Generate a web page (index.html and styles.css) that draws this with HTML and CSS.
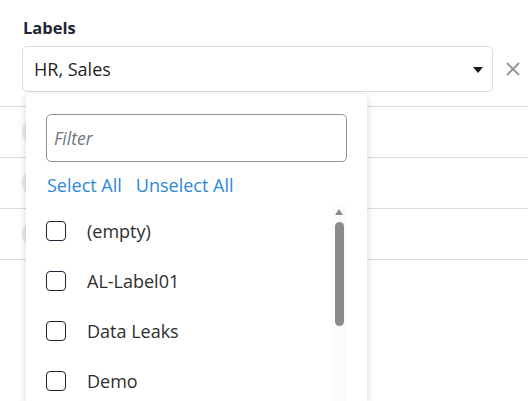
FILE: index.html
```html
<!DOCTYPE html>
<html>
<head>
<meta charset="utf-8">
<link rel="stylesheet" href="styles.css">
</head>
<body>
<div class="page">
  <div class="field">
    <div class="field-label">Labels</div>
    <div class="select-row">
      <div class="select">
        <span class="select-value">HR, Sales</span>
        <span class="caret"></span>
      </div>
      <svg class="clear" width="14" height="14" viewBox="0 0 14 14"><path d="M1 1L13 13M13 1L1 13" stroke="#8c939c" stroke-width="1.8" fill="none"/></svg>
    </div>
  </div>
  <div class="rows">
    <div class="row"><span class="pill"></span></div>
    <div class="row"><span class="pill"></span></div>
    <div class="row"><span class="pill"></span></div>
  </div>

  <div class="dropdown">
    <div class="filter"><span class="placeholder">Filter</span></div>
    <div class="actions"><a class="link">Select All</a><a class="link">Unselect All</a></div>
    <div class="list">
      <div class="items">
        <div class="item"><span class="box"></span><span class="item-text">(empty)</span></div>
        <div class="item"><span class="box"></span><span class="item-text">AL-Label01</span></div>
        <div class="item"><span class="box"></span><span class="item-text">Data Leaks</span></div>
        <div class="item"><span class="box"></span><span class="item-text">Demo</span></div>
      </div>
      <div class="scrollbar">
        <span class="arrow"></span>
        <span class="thumb"></span>
      </div>
    </div>
  </div>
</div>
</body>
</html>
```

FILE: styles.css
```css
html, body {
  margin: 0;
  padding: 0;
  background: #fff;
  overflow: hidden;
}
body {
  font-family: "Open Sans", "Noto Sans", sans-serif;
  width: 528px;
  height: 401px;
}
.page {
  position: relative;
  height: 401px;
  overflow: hidden;
}
.field {
  padding: 17px 0 0 22px;
}
.field-label {
  font-size: 16.5px;
  font-weight: 700;
  color: #1c2636;
  line-height: 22px;
  padding-left: 1px;
  margin-bottom: 7px;
}
.select-row {
  display: flex;
  align-items: center;
}
.select {
  box-sizing: border-box;
  width: 471px;
  height: 46px;
  border: 1px solid #dcdcdc;
  border-radius: 5px;
  display: flex;
  align-items: center;
  justify-content: space-between;
  padding: 0 9px 0 11px;
}
.select-value {
  font-size: 18px;
  line-height: 24px;
  color: #1f1f1f;
}
.caret {
  width: 0;
  height: 0;
  border-left: 5px solid transparent;
  border-right: 5px solid transparent;
  border-top: 6px solid #15191f;
  margin-top: 1px;
}
.clear {
  margin-left: 13px;
}
.rows {
  margin-top: 14px;
  border-top: 1px solid #dcdcdc;
}
.row {
  height: 50px;
  border-bottom: 1px solid #dcdcdc;
  display: flex;
  align-items: center;
  padding-left: 22px;
}
.pill {
  width: 40px;
  height: 28px;
  border-radius: 14px;
  background: #e9e9e9;
}
.dropdown {
  position: absolute;
  left: 26px;
  top: 94px;
  width: 341px;
  height: 307px;
  overflow: hidden;
  background: #fff;
  border-radius: 5px 5px 0 0;
  box-shadow: 0 2px 8px rgba(0, 0, 0, 0.16);
  box-sizing: border-box;
  padding: 20px 20px 0 20px;
}
.filter {
  box-sizing: border-box;
  height: 48px;
  border: 1px solid #8c939c;
  border-radius: 5px;
  display: flex;
  align-items: center;
  padding-left: 7px;
}
.placeholder {
  font-size: 17.5px;
  font-style: italic;
  color: #6f7680;
}
.actions {
  display: flex;
  gap: 14px;
  margin-top: 11px;
  padding-left: 1px;
  line-height: 24px;
}
.link {
  font-size: 18px;
  color: #2c88d9;
}
.list {
  display: flex;
  margin-top: 9px;
}
.items {
  flex: 1;
}
.item {
  height: 50px;
  display: flex;
  align-items: center;
}
.box {
  box-sizing: border-box;
  width: 20px;
  height: 20px;
  border: 1.5px solid #1b2534;
  border-radius: 4px;
  margin-right: 21px;
}
.item-text {
  font-size: 18px;
  line-height: 24px;
  color: #2e2e2e;
}
.scrollbar {
  width: 14px;
  margin-right: 1px;
  background: #fbfbfb;
  display: flex;
  flex-direction: column;
  align-items: center;
  padding-top: 3px;
}
.arrow {
  width: 0;
  height: 0;
  border-left: 4.5px solid transparent;
  border-right: 4.5px solid transparent;
  border-bottom: 6px solid #8a8a8a;
}
.thumb {
  margin-top: 7px;
  width: 9px;
  height: 104px;
  border-radius: 5px;
  background: #8a8a8a;
}
```
